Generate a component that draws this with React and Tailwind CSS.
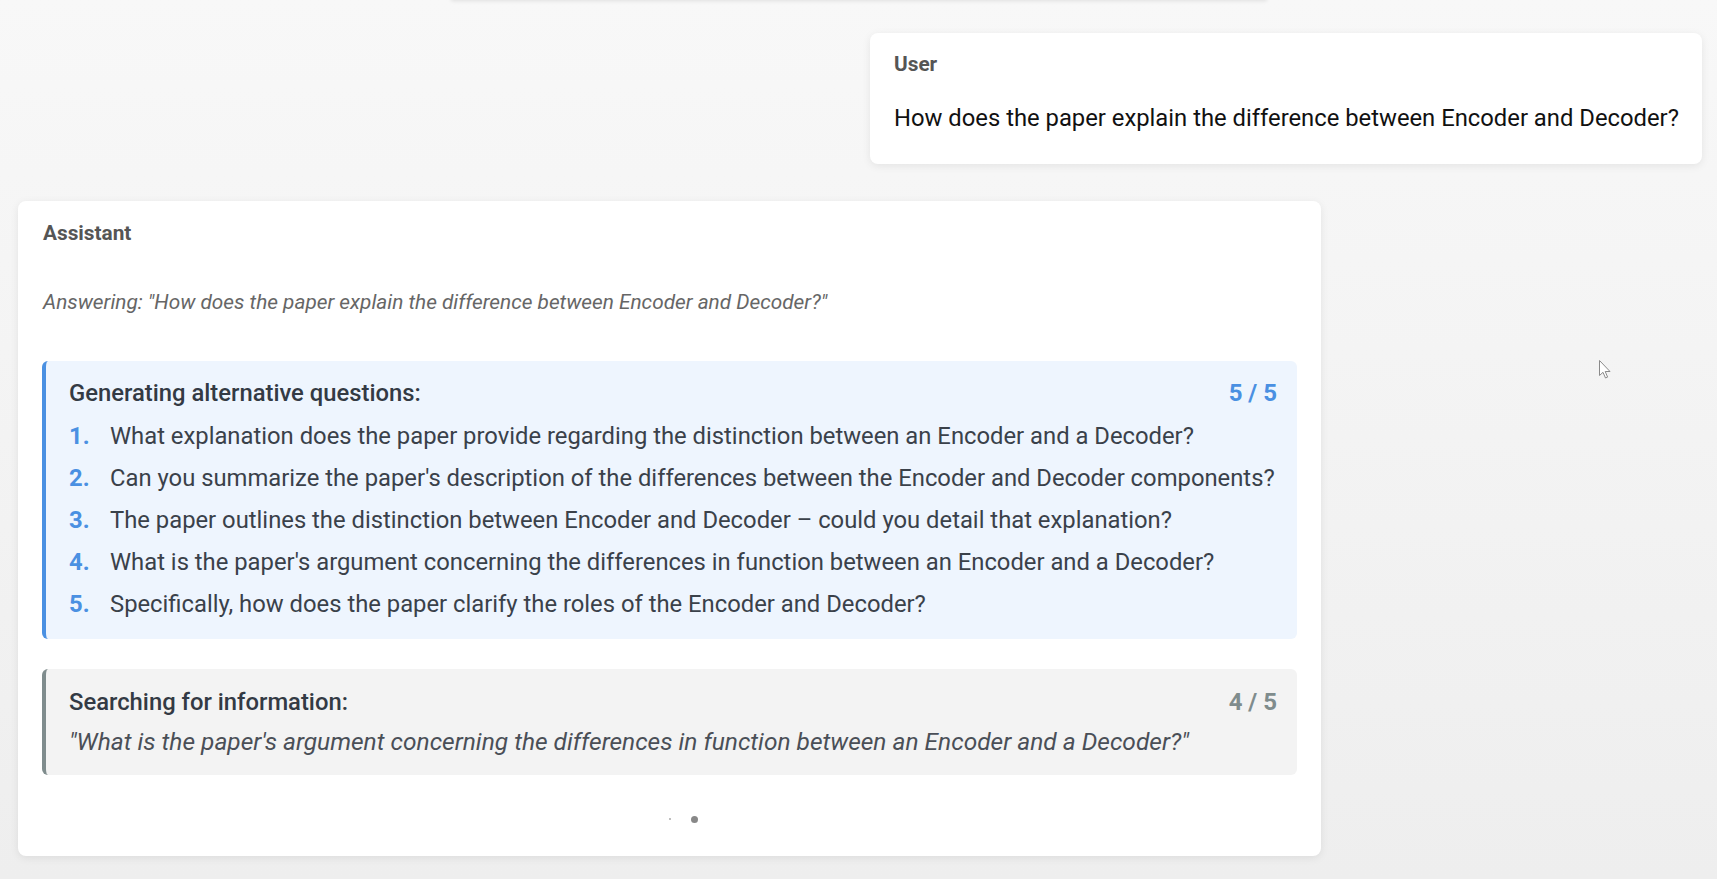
export default function App() {
  const items = [
    "What explanation does the paper provide regarding the distinction between an Encoder and a Decoder?",
    "Can you summarize the paper's description of the differences between the Encoder and Decoder components?",
    "The paper outlines the distinction between Encoder and Decoder \u2013 could you detail that explanation?",
    "What is the paper's argument concerning the differences in function between an Encoder and a Decoder?",
    "Specifically, how does the paper clarify the roles of the Encoder and Decoder?",
  ];
  return (
    <div className="relative h-[879px] overflow-hidden bg-linear-to-b from-[#f8f8f8] to-[#eeeeee] font-[Roboto,sans-serif]">
      <div className="mx-auto -mt-[20px] h-[20px] w-[816px] bg-[#f8f8f8] shadow-[0_1px_4px_rgba(0,0,0,0.10)]" />

      <div className="ml-auto mr-[15px] mt-[33px] w-[832px] rounded-lg bg-white px-6 pt-[19px] pb-[30px] shadow-[0_2px_8px_rgba(0,0,0,0.08)]">
        <div className="text-[20.8px] leading-[24px] font-bold text-[#555555]">User</div>
        <div className="mt-[26px] whitespace-nowrap text-[23.8px] leading-[32px] text-[#111111]">
          How does the paper explain the difference between Encoder and Decoder?
        </div>
      </div>

      <div className="ml-[18px] mt-[37px] w-[1303px] rounded-lg bg-white pl-[25px] pr-6 pt-[20px] pb-[33px] shadow-[0_2px_8px_rgba(0,0,0,0.08)]">
        <div className="text-[20.8px] leading-[24px] font-bold text-[#555555]">Assistant</div>
        <div className="mt-[45px] whitespace-nowrap text-[20.8px] leading-[24px] italic text-[#666666]">
          Answering: "How does the paper explain the difference between Encoder and Decoder?"
        </div>

        <div className="-ml-px mt-[47px] rounded-md border-l-4 border-[#4a90e2] bg-[#eef5fe] pl-[23px] pr-[20px] pt-[18px] pb-[19px]">
          <div className="flex items-center justify-between">
            <span className="text-[23.8px] leading-[28px] font-medium text-[#333a44]">Generating alternative questions:</span>
            <span className="text-[24px] leading-[28px] font-bold text-[#4a90e2]">5 / 5</span>
          </div>
          <ol className="mt-[13px] flex flex-col gap-[10px]">
            {items.map((q, i) => (
              <li key={i} className="flex h-[32px] items-center">
                <span className="w-[41px] shrink-0 text-[23.8px] leading-[32px] font-bold text-[#4a90e2]">{i + 1}.</span>
                <span className="whitespace-nowrap text-[23.8px] leading-[32px] text-[#3a414a]">{q}</span>
              </li>
            ))}
          </ol>
        </div>

        <div className="-ml-px mt-[30px] rounded-md border-l-4 border-[#7f8c8d] bg-[#f3f3f3] pl-[23px] pr-[20px] pt-[19px] pb-[17px]">
          <div className="flex items-center justify-between">
            <span className="text-[23.8px] leading-[28px] font-medium text-[#333a44]">Searching for information:</span>
            <span className="text-[24px] leading-[28px] font-bold text-[#7f8c8d]">4 / 5</span>
          </div>
          <div className="mt-[10px] whitespace-nowrap text-[24.5px] leading-[32px] italic text-[#4a4f57]">
            "What is the paper's argument concerning the differences in function between an Encoder and a Decoder?"
          </div>
        </div>

        <div className="mt-[40px] flex h-[8px] items-center justify-center gap-[16px]">
          <span className="flex h-[8px] w-[8px] items-center justify-center"><span className="h-0 w-0 rounded-full bg-[#888888]" /></span>
          <span className="flex h-[8px] w-[8px] items-center justify-center"><span className="h-[2px] w-[2px] rounded-full bg-[#aaaaaa]" /></span>
          <span className="flex h-[8px] w-[8px] items-center justify-center"><span className="h-[7px] w-[7px] rounded-full bg-[#888888]" /></span>
        </div>
      </div>

      <svg className="absolute left-[1599px] top-[360px]" width="12" height="19" viewBox="0 0 12 19">
        <path d="M0.5 0.5 L0.5 15.5 L4 12.3 L6.5 18 L8.6 17.1 L6.2 11.5 L11 11.5 Z" fill="#ffffff" stroke="#8a8a8a" strokeWidth="1" strokeLinejoin="round" />
      </svg>
    </div>
  );
}
